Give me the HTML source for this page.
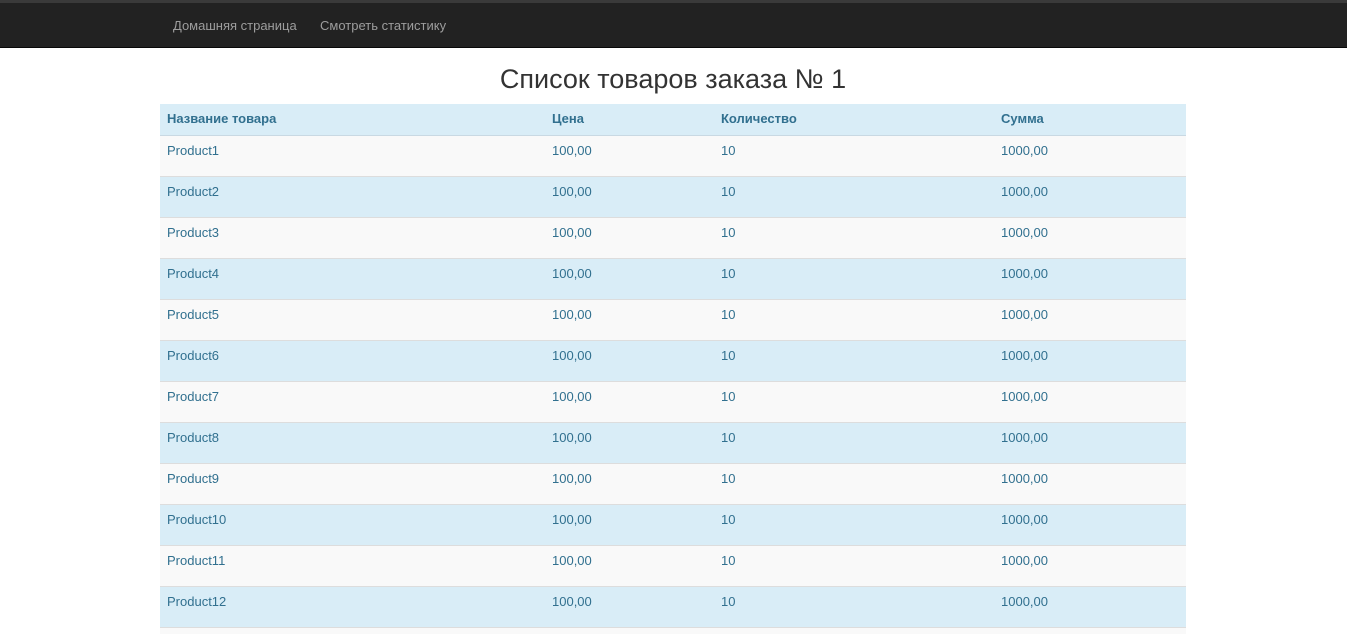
<!DOCTYPE html>
<html style="overflow:hidden"><head><meta charset="utf-8"><style>
body{margin:0;background:#fff;font-family:"Liberation Sans",Arial,sans-serif;font-size:13px;width:1349px;height:634px;overflow:hidden;position:relative}
.nav{position:absolute;left:0;top:0;width:1347px;height:48px;background:#222;border-top:3px solid #3a3a3a;box-sizing:border-box;border-bottom:1px solid #080808}
.nav a{position:absolute;top:15px;color:#9d9d9d;font-size:13px;text-decoration:none}
h1{position:absolute;top:64px;left:0;width:1346px;text-align:center;margin:0;font-weight:normal;font-size:27px;color:#333}
.wrap{position:absolute;left:160px;top:104px;width:1026px;height:530px;overflow:hidden}
table{width:1026px;border-collapse:collapse;color:#31708f}
td,th{padding:0 0 0 7px;text-align:left;vertical-align:top;border-top:1px solid #ddd}
th{height:31px;line-height:29px;background:#d9edf7;border-top:none;border-bottom:1px solid #c9d9e3;font-weight:bold}
td{height:40px;line-height:30px}
tr.o td{background:#f9f9f9}
tr.e td{background:#d9edf7}
</style></head><body>
<div class="nav"><a style="left:173px">Домашняя страница</a><a style="left:320px">Смотреть статистику</a></div>
<h1>Список товаров заказа № 1</h1>
<div class="wrap"><table>
<tr><th style="width:378px">Название товара</th><th style="width:162px">Цена</th><th style="width:273px">Количество</th><th>Сумма</th></tr>
<tr class="o"><td>Product1</td><td>100,00</td><td>10</td><td>1000,00</td></tr>
<tr class="e"><td>Product2</td><td>100,00</td><td>10</td><td>1000,00</td></tr>
<tr class="o"><td>Product3</td><td>100,00</td><td>10</td><td>1000,00</td></tr>
<tr class="e"><td>Product4</td><td>100,00</td><td>10</td><td>1000,00</td></tr>
<tr class="o"><td>Product5</td><td>100,00</td><td>10</td><td>1000,00</td></tr>
<tr class="e"><td>Product6</td><td>100,00</td><td>10</td><td>1000,00</td></tr>
<tr class="o"><td>Product7</td><td>100,00</td><td>10</td><td>1000,00</td></tr>
<tr class="e"><td>Product8</td><td>100,00</td><td>10</td><td>1000,00</td></tr>
<tr class="o"><td>Product9</td><td>100,00</td><td>10</td><td>1000,00</td></tr>
<tr class="e"><td>Product10</td><td>100,00</td><td>10</td><td>1000,00</td></tr>
<tr class="o"><td>Product11</td><td>100,00</td><td>10</td><td>1000,00</td></tr>
<tr class="e"><td>Product12</td><td>100,00</td><td>10</td><td>1000,00</td></tr>
<tr class="o"><td>&nbsp;</td><td></td><td></td><td></td></tr>
</table></div>
</body></html>
